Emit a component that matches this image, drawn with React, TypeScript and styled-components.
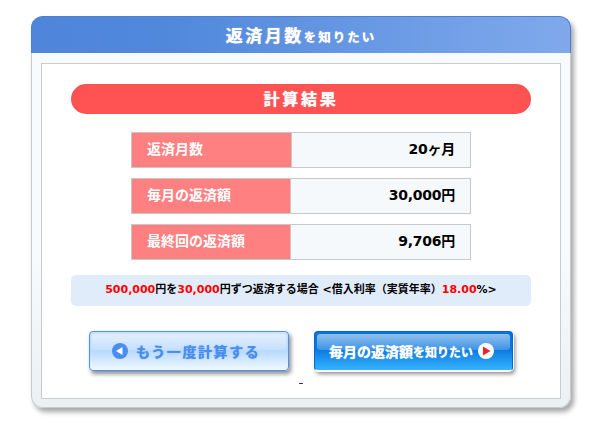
import React from "react";
import styled, { createGlobalStyle } from "styled-components";

const Global = createGlobalStyle`
  html, body { margin: 0; padding: 0; background: #fff; }
  body { font-family: "DejaVu Sans", "Noto Sans CJK JP", sans-serif; color: #000; }
`;

const Page = styled.div`
  width: 596px;
  height: 426px;
  padding: 16px 25px 0 31px;
  box-sizing: border-box;
`;

const Card = styled.section`
  width: 540px;
  height: 392px;
  box-sizing: border-box;
  border-radius: 12px;
  border: 1px solid #c8ccd0;
  border-top: 0;
  background: linear-gradient(180deg, #f7fbfe 0%, #f7fbfe 60%, #ebf0f3 100%);
  box-shadow: 3px 4px 5px rgba(0, 0, 0, 0.35);
  display: flex;
  flex-direction: column;
`;

const Header = styled.h1`
  margin: 0 -1px;
  height: 37px;
  box-sizing: border-box;
  border: 1px solid #4f7fd0;
  border-bottom: 0;
  border-radius: 12px 12px 0 0;
  background: linear-gradient(90deg, #4f86dc 0%, #5088dc 25%, #80a9ec 100%);
  color: #fff;
  font-size: 17px;
  font-weight: 700;
  letter-spacing: 2.5px;
  line-height: 39px;
  text-align: center;
  text-shadow: 0 0 1px #fff;
`;

const HeaderSmall = styled.span`
  font-size: 12.5px;
  letter-spacing: 2px;
`;

const Inner = styled.div`
  margin: 10px 9px 0;
  height: 336px;
  box-sizing: border-box;
  background: #fff;
  border: 1px solid #c8ccd0;
  padding: 20px 29px 0;
  display: flex;
  flex-direction: column;
  align-items: center;
`;

const Banner = styled.h2`
  margin: 0;
  width: 100%;
  height: 30px;
  border-radius: 15px;
  background: #ff5252;
  color: #fff;
  font-size: 16px;
  font-weight: 700;
  letter-spacing: 2.8px;
  line-height: 32px;
  text-align: center;
  text-shadow: 0 0 1px #fff;
`;

const Rows = styled.div`
  margin-top: 18px;
  width: 340px;
  display: flex;
  flex-direction: column;
  gap: 10px;
`;

const Row = styled.div`
  height: 36px;
  box-sizing: border-box;
  border: 1px solid #c8c8c8;
  display: flex;
`;

const Label = styled.div<{ $w: number }>`
  width: ${(p) => p.$w}px;
  box-sizing: border-box;
  flex: none;
  background: #ff8080;
  border-right: 1px solid #c8c8c8;
  color: #fff;
  font-size: 14px;
  font-weight: 700;
  line-height: 32px;
  padding-left: 15px;
`;

const Value = styled.div`
  flex: 1;
  background: #f6f9fc;
  font-size: 14px;
  font-weight: 700;
  line-height: 32px;
  letter-spacing: -0.25px;
  text-align: right;
  padding-right: 15px;
`;

const Note = styled.p`
  margin: 15px 0 0;
  width: 100%;
  height: 31px;
  border-radius: 5px;
  background: #e1ecfa;
  font-size: 11px;
  font-weight: 700;
  line-height: 30px;
  text-align: center;
`;

const Red = styled.span`
  color: #ff0000;
`;

const Buttons = styled.div`
  margin-top: 25px;
  display: flex;
  gap: 25px;
`;

const BackButton = styled.button`
  position: relative;
  width: 200px;
  height: 40px;
  box-sizing: border-box;
  border: 1px solid #4a90f5;
  border-radius: 4px;
  background: linear-gradient(180deg, #cfe3fb 0%, #b8daff 50%, #f0f8ff 100%);
  box-shadow: 2px 3px 4px rgba(0, 0, 0, 0.45);
  color: #4a8cf0;
  font: 700 14px "DejaVu Sans", "Noto Sans CJK JP", sans-serif;
  letter-spacing: 1.6px;
  padding: 0 0 1px 22px;
  display: flex;
  align-items: center;
  gap: 8px;
  &::before {
    content: "";
    position: absolute;
    left: 2px;
    right: 2px;
    top: 2px;
    height: 16px;
    border-radius: 3px;
    background: linear-gradient(180deg, rgba(255, 255, 255, 0.45), rgba(255, 255, 255, 0.15));
  }
`;

const NextButton = styled.button`
  position: relative;
  width: 199px;
  height: 40px;
  box-sizing: border-box;
  border: 1px solid #0068d0;
  border-bottom-color: #fff;
  border-radius: 4px;
  background: linear-gradient(180deg, #0a72da 0%, #0a78e0 45%, #36b4ff 100%);
  box-shadow: 0 0 0 1px #fff, 2px 3px 4px rgba(0, 0, 0, 0.45);
  color: #fff;
  font: 700 14px "DejaVu Sans", "Noto Sans CJK JP", sans-serif;
  padding: 0 0 1px 14px;
  display: flex;
  align-items: center;
  gap: 5px;
  &::before {
    content: "";
    position: absolute;
    left: 2px;
    right: 2px;
    top: 2px;
    height: 16px;
    border-radius: 3px;
    background: linear-gradient(180deg, rgba(255, 255, 255, 0.55), rgba(255, 255, 255, 0.2));
  }
`;

const ButtonSmall = styled.span`
  font-size: 12px;
`;

const ButtonText = styled.span`
  position: relative;
  text-shadow: 0 0 1px currentColor;
`;

const Icon = styled.svg`
  position: relative;
  width: 16px;
  height: 16px;
  flex: none;
`;

const BlankLink = styled.a`
  margin-top: 0;
  font-size: 12px;
  line-height: 14px;
  color: #3a1590;
  text-decoration: underline;
  white-space: pre;
`;

export default function App() {
  return (
    <Page>
      <Global />
      <Card>
        <Header>
          返済月数<HeaderSmall>を知りたい</HeaderSmall>
        </Header>
        <Inner>
          <Banner>計算結果</Banner>
          <Rows>
            <Row>
              <Label $w={160}>返済月数</Label>
              <Value>20ヶ月</Value>
            </Row>
            <Row>
              <Label $w={159}>毎月の返済額</Label>
              <Value>30,000円</Value>
            </Row>
            <Row>
              <Label $w={159}>最終回の返済額</Label>
              <Value>9,706円</Value>
            </Row>
          </Rows>
          <Note>
            <Red>500,000</Red>円を<Red>30,000</Red>円ずつ返済する場合 &lt;借入利率（実質年率）<Red>18.00</Red>%&gt;
          </Note>
          <Buttons>
            <BackButton>
              <Icon viewBox="0 0 16 16">
                <circle cx="8" cy="8" r="8" fill="#4a8cf0" />
                <path d="M4 8 L10.5 4 V12 Z" fill="#fff" />
              </Icon>
              <ButtonText>もう一度計算する</ButtonText>
            </BackButton>
            <NextButton>
              <ButtonText>
                毎月の返済額<ButtonSmall>を知りたい</ButtonSmall>
              </ButtonText>
              <Icon viewBox="0 0 16 16">
                <circle cx="8" cy="8" r="8" fill="#fff" />
                <path d="M5 3.5 L12.5 8 L5 12.5 Z" fill="#f5222d" />
              </Icon>
            </NextButton>
          </Buttons>
          <BlankLink href="#"> </BlankLink>
        </Inner>
      </Card>
    </Page>
  );
}
